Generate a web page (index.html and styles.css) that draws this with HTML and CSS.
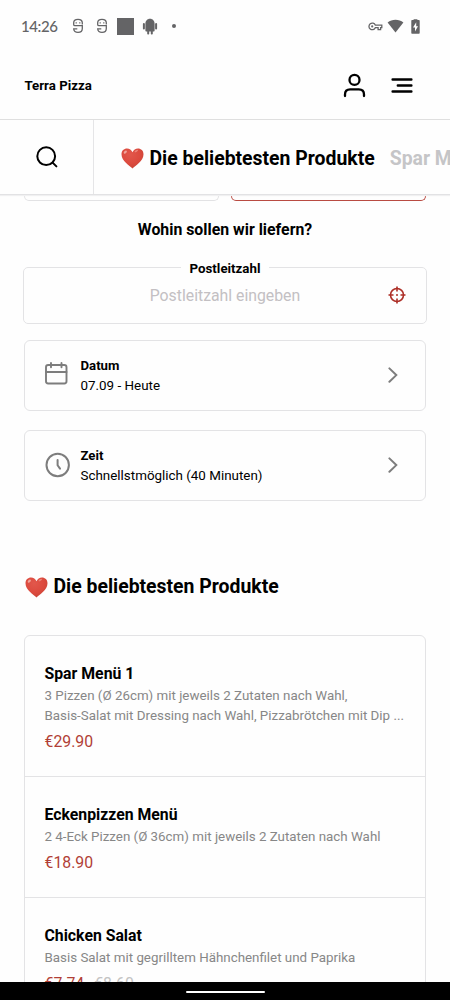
FILE: index.html
```
<!DOCTYPE html>
<html lang="de">
<head>
<meta charset="utf-8">
<title>Terra Pizza</title>
<link rel="stylesheet" href="styles.css">
</head>
<body>
<svg class="defs" width="0" height="0" aria-hidden="true">
  <defs>
    <radialGradient id="heartFill" cx="0.4" cy="0.3" r="0.75">
      <stop offset="0" stop-color="#e2574b"/>
      <stop offset="0.6" stop-color="#dc4a3e"/>
      <stop offset="1" stop-color="#c74436"/>
    </radialGradient>
    <symbol id="heart" viewBox="0 0 23 21">
      <path d="M11.5 20.5C8.5 17.6.5 13 .5 6.300 .5 2.800 3 .6 6 .6c2.500 0 4.500 1.400 5.500 3.700C12.500 2 14.500.6 17 .6c3 0 5.500 2.200 5.500 5.700 0 6.700-8 11.300-11 14.200z" fill="url(#heartFill)"/>
      <ellipse cx="4.300" cy="4.200" rx="1.900" ry="1.200" transform="rotate(-45 4.300 4.200)" fill="#f0a49a"/>
      <ellipse cx="15.300" cy="3" rx="1.900" ry=".9" transform="rotate(-30 15.300 3)" fill="#ea8479"/>
    </symbol>
    <symbol id="ghost" viewBox="0 0 12 16">
      <path d="M10.300 6.500V4.800C10.300 2.500 8.500 1.300 6 1.300S1.700 2.500 1.700 4.800v1.700c0 .8.500 1.200 1.300 1.200h7.300v2.800c0 2.500-1.800 3.900-4.300 3.900s-4.300-1.400-4.300-3.600h3.600" fill="none" stroke="#646466" stroke-width="1.300"/>
      <path d="M3.600 4.800h1.200M7.200 4.800h1.200" stroke="#646466" stroke-width="1.200"/>
    </symbol>
  </defs>
</svg>
<div class="screen">
  <div class="status">
    <span class="clock">14:26</span>
    <svg class="ghost" width="12" height="16"><use href="#ghost"/></svg>
    <svg class="ghost second" width="12" height="16"><use href="#ghost"/></svg>
    <span class="square"></span>
    <svg class="robot" width="16" height="17" viewBox="0 0 16 17" fill="#646466">
      <path d="M3.400 6C3.400 3 5.200.8 8 .8S12.600 3 12.600 6v6.500c0 .6-.4 1-1 1h-.8v2.300c0 1-2 1-2 0v-2.300H7.200v2.300c0 1-2 1-2 0v-2.300h-.8c-.6 0-1-.4-1-1z"/>
      <rect x=".9" y="5" width="2" height="6.500" rx="1"/><rect x="13.100" y="5" width="2" height="6.500" rx="1"/>
    </svg>
    <span class="dot"></span>
    <div class="status-right">
      <svg width="15" height="9" viewBox="0 0 15 9" fill="none" stroke="#646466">
        <path d="M7.300 3.100h6.500v2.600h-1.200v1.900h-2.500V5.700H7.300A3.300 3.300 0 1 1 7.300 3.100z" stroke-width="1.300"/>
        <circle cx="4.200" cy="4.400" r="1.100" fill="#646466" stroke="none"/>
      </svg>
      <svg width="17" height="14" viewBox="0 0 17 14"><path d="M8.500 13.500.6 3.600C5-.2 12-.2 16.400 3.600z" fill="#646466"/></svg>
      <svg class="battery" width="9" height="15" viewBox="0 0 9 15"><path d="M2.600 1V.3h3.800V1h1.300c.6 0 1 .4 1 1v11.700c0 .6-.4 1-1 1H1.300c-.6 0-1-.4-1-1V2c0-.6.4-1 1-1z" fill="#646466"/><path d="M5.200 3.200 2 8.400h2v4l3-5.200H5.200z" fill="#fff"/></svg>
    </div>
  </div>

  <header class="header">
    <span class="brand">Terra Pizza</span>
    <svg class="user" width="23" height="26" viewBox="0 0 23 26" fill="none" stroke="#000" stroke-width="2.300" stroke-linecap="round">
      <circle cx="11.500" cy="6.900" r="5"/>
      <path d="M2 23v-1.500c0-3.300 2-5.200 5.200-5.200h8.600c3.200 0 5.200 1.900 5.200 5.200V23"/>
    </svg>
    <svg class="menu" width="22" height="16" viewBox="0 0 22 16" stroke="#000" stroke-width="2.400" stroke-linecap="round">
      <path d="M1.600 1.500h18.800M6.800 7.500h13.600M1.600 13.500h18.800"/>
    </svg>
  </header>

  <nav class="nav">
    <div class="search">
      <svg width="24" height="24" viewBox="0 0 24 24" fill="none" stroke="#000" stroke-width="2" stroke-linecap="round">
        <circle cx="11.200" cy="11.200" r="8.900"/><path d="m17.600 17.600 3.800 3.800"/>
      </svg>
    </div>
    <div class="categories">
      <svg class="heart" width="23" height="21"><use href="#heart"/></svg>
      <span class="category">Die beliebtesten Produkte</span>
      <span class="category muted">Spar Menüs</span>
    </div>
  </nav>

  <main class="content">
    <div class="tabs"><div class="tab"></div><div class="tab active"></div></div>
    <h2 class="question">Wohin sollen wir liefern?</h2>
    <fieldset class="zip">
      <legend>Postleitzahl</legend>
      <span class="placeholder">Postleitzahl eingeben</span>
      <svg class="locate" width="18" height="18" viewBox="0 0 18 18" fill="none" stroke="#ad2f27" stroke-width="1.600">
        <circle cx="9" cy="9" r="6.500"/><path d="M9 .5v5M9 12.500v5M.5 9h5M12.500 9h5"/><circle cx="9" cy="9" r="1" fill="#ad2f27" stroke="none"/>
      </svg>
    </fieldset>
    <section class="card date">
      <svg class="card-icon" width="26" height="26" viewBox="0 0 26 26" fill="none" stroke="#7d7d7d" stroke-width="1.900" stroke-linecap="round">
        <rect x="2" y="3" width="20.500" height="18.500" rx="2.200"/><path d="M2 10h20.500M7 1v4.300M17.500 1v4.300"/>
      </svg>
      <div class="card-text"><b>Datum</b><span>07.09 - Heute</span></div>
      <svg class="chevron" width="10" height="16" viewBox="0 0 10 16" fill="none" stroke="#7d7d7d" stroke-width="2" stroke-linecap="round"><path d="m1.400 1.400 6.900 6.700-6.900 6.700"/></svg>
    </section>
    <section class="card">
      <svg class="card-icon" width="26" height="26" viewBox="0 0 26 26" fill="none" stroke="#7d7d7d" stroke-width="2" stroke-linecap="round">
        <circle cx="13.700" cy="13" r="11.200"/><path d="M13.600 8v5.300l2.400 3.400"/>
      </svg>
      <div class="card-text"><b>Zeit</b><span>Schnellstmöglich (40 Minuten)</span></div>
      <svg class="chevron" width="10" height="16" viewBox="0 0 10 16" fill="none" stroke="#7d7d7d" stroke-width="2" stroke-linecap="round"><path d="m1.400 1.400 6.900 6.700-6.900 6.700"/></svg>
    </section>

    <h1 class="section-title"><svg class="heart" width="23" height="21"><use href="#heart"/></svg><span>Die beliebtesten Produkte</span></h1>

    <div class="products">
      <article class="product">
        <h3>Spar Menü 1</h3>
        <p>3 Pizzen (Ø 26cm) mit jeweils 2 Zutaten nach Wahl,<br>Basis-Salat mit Dressing nach Wahl, Pizzabrötchen mit Dip ...</p>
        <div class="price">€29.90</div>
      </article>
      <article class="product">
        <h3>Eckenpizzen Menü</h3>
        <p>2 4-Eck Pizzen (Ø 36cm) mit jeweils 2 Zutaten nach Wahl</p>
        <div class="price">€18.90</div>
      </article>
      <article class="product">
        <h3>Chicken Salat</h3>
        <p>Basis Salat mit gegrilltem Hähnchenfilet und Paprika</p>
        <div class="price">€7.74<s>€8.60</s></div>
      </article>
    </div>
  </main>
  <footer class="system-bar"><span></span></footer>
</div>
</body>
</html>
```
FILE: styles.css
```
* { box-sizing: border-box; }
body { margin: 0; background: #fefefe; color: #000; font-family: Roboto, sans-serif; }
h1, h2, h3, p { margin: 0; }
svg { display: block; flex: none; }
.defs { position: absolute; }
.screen { width: 450px; height: 1000px; overflow: hidden; display: flex; flex-direction: column; background: #fefefe; }

.status { height: 52px; flex: none; display: flex; align-items: center; padding: 0 30px 0 21px; }
.clock { width: 51px; font-family: Lato, sans-serif; font-weight: 500; font-size: 15px; line-height: 20px; letter-spacing: -0.4px; color: #646466; }
.ghost.second { margin-left: 12px; }
.square { width: 17px; height: 17px; margin-left: 9px; background: #646466; }
.robot { margin-left: 8px; }
.dot { width: 4px; height: 4px; margin-left: 14px; border-radius: 50%; background: #646466; }
.status-right { margin-left: auto; display: flex; align-items: center; gap: 4px; }
.battery { margin-left: 3px; }

.header { height: 68px; flex: none; display: flex; align-items: center; padding: 0 37px 0 24.5px; border-bottom: 1px solid #dfdfdf; }
.brand { padding-top: 1px; font-weight: 700; font-size: 13.25px; line-height: 20px; margin-right: auto; }
.menu { margin-left: 25px; }

.nav { height: 75px; flex: none; display: flex; border-bottom: 1px solid #e2e2e4; box-shadow: 0 1px 1px #f0f0f1; position: relative; background: #fefefe; }
.search { width: 94px; flex: none; display: flex; align-items: center; justify-content: center; border-right: 1px solid #e5e5e7; }
.categories { flex: 1; min-width: 0; overflow: hidden; display: flex; align-items: center; padding: 3px 0 0 26.5px; white-space: nowrap; }
.category { margin-left: 6px; font-weight: 700; font-size: 19.4px; line-height: 24px; }
.category.muted { margin-left: 15px; color: #c5c5c7; }

.content { flex: 1; min-height: 0; overflow: hidden; padding: 0 24px; }
.tabs { display: flex; gap: 12px; height: 6px; }
.tab { flex: 1; border: 1px solid #e2e2e4; border-top: 0; border-radius: 0 0 5px 5px; }
.tab.active { border-color: #b94b42; }
.question { padding-top: 1px; margin-top: 16px; font-weight: 700; font-size: 15.85px; line-height: 24px; text-align: center; }

.zip { margin: 15px -1px 0; padding: 0 20px 8px; height: 67px; border: 1px solid #e3e3e5; border-radius: 5px; display: flex; align-items: center; }
.zip legend { margin: 0 auto; padding: 3px 9px 0; font-weight: 700; font-size: 13.3px; line-height: 17px; }
.placeholder { flex: 1; padding-left: 18px; text-align: center; font-size: 15.8px; line-height: 20px; color: #c3c0c3; }
.locate { margin-bottom: 3px; }

.card { height: 71px; margin-bottom: 19px; padding: 0 27px 0 19px; display: flex; align-items: center; border: 1px solid #e3e3e5; border-radius: 6px; }
.date { margin-top: 16px; }
.card-icon, .chevron { margin-bottom: 2px; }
.card-text { flex: 1; margin-left: 10.5px; padding-top: 1px; display: flex; flex-direction: column; font-size: 13.4px; line-height: 20px; }
.card-text b { font-size: 13.2px; }

.section-title { display: flex; align-items: center; gap: 6px; margin: 74px 0 36px 0.5px; font-weight: 700; font-size: 19.4px; line-height: 24px; }

.products { border: 1px solid #e3e3e5; border-radius: 6px 6px 0 0; }
.product { padding: 27px 19.500px 23px; }
.product + .product { border-top: 1px solid #e3e3e5; }
.product h3 { font-weight: 700; font-size: 15.8px; line-height: 22px; }
.product p { padding-top: 1px; font-size: 13.35px; line-height: 20px; color: #878787; white-space: nowrap; }
.price { margin-top: 5px; font-size: 15.8px; line-height: 22px; color: #b13f36; }
.price s { margin-left: 10px; color: #c3c3c3; }

.system-bar { height: 18px; flex: none; display: flex; justify-content: center; padding-top: 9px; background: #000; }
.system-bar span { width: 79px; height: 2px; border-radius: 1px; background: #fff; }
```
